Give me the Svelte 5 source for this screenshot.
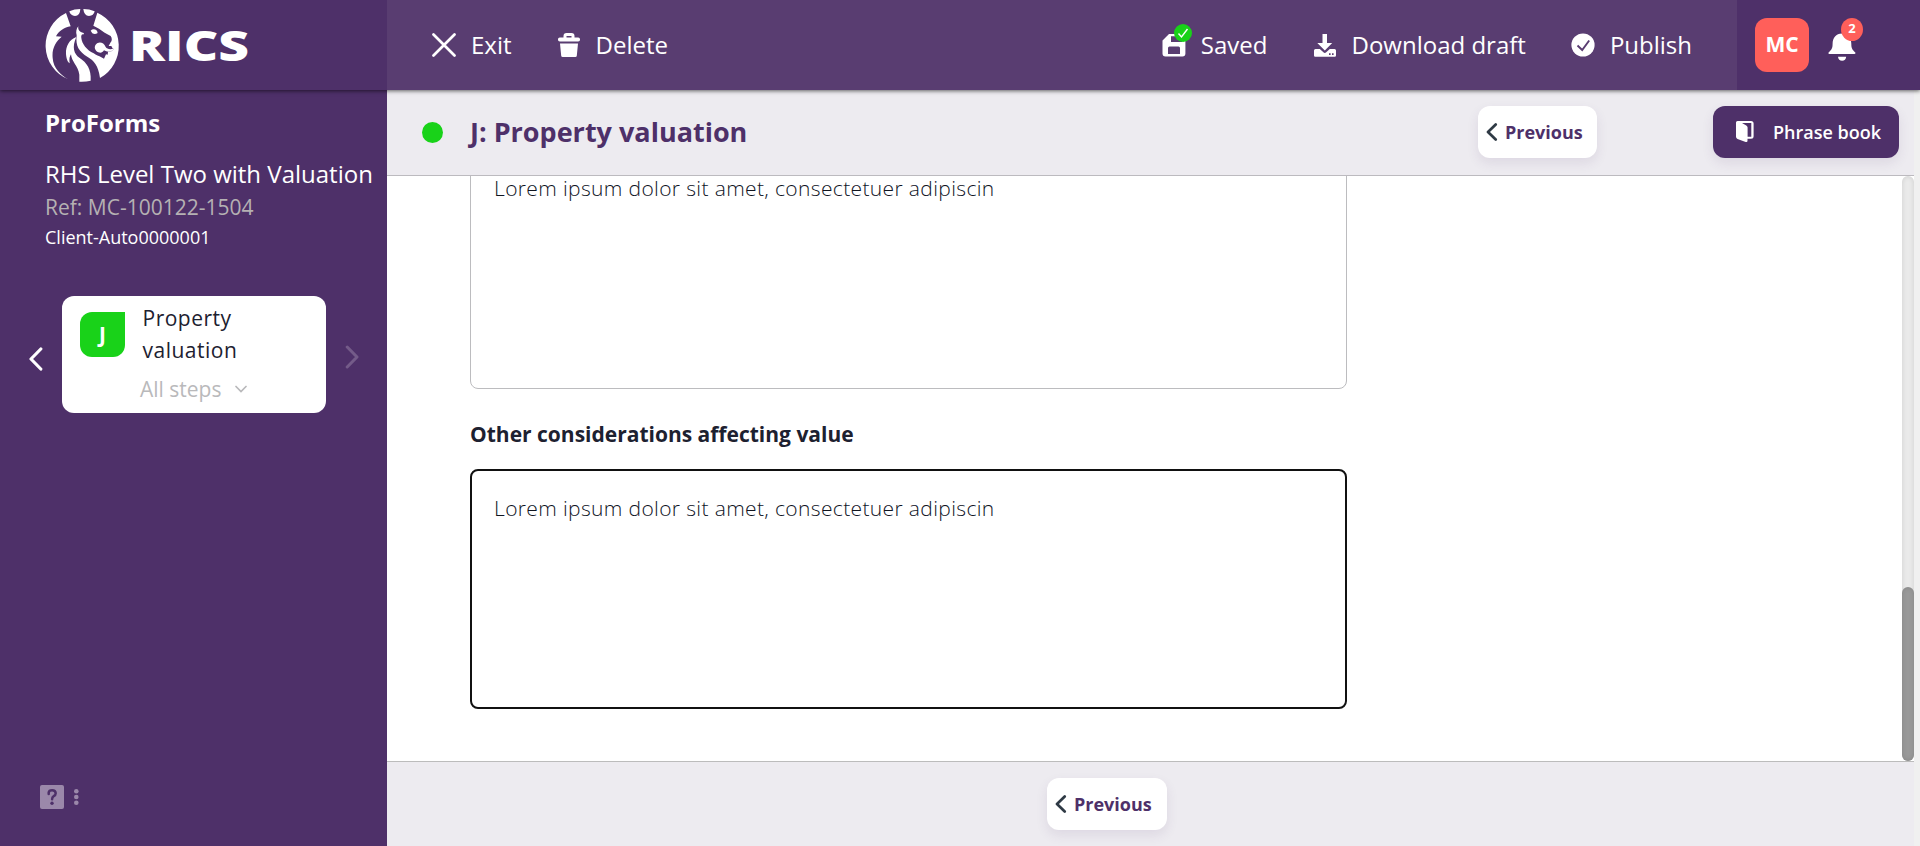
<script>
  const body = 'Lorem ipsum dolor sit amet, consectetuer adipiscin';
  const report = {
    name: 'RHS Level Two with Valuation',
    ref: 'Ref: MC-100122-1504',
    client: 'Client-Auto0000001'
  };
</script>

{#snippet previous()}
  <button class="btn light">
    <svg width="12" height="18" viewBox="0 0 12 18"><path d="M9.7 1.5 2 9l7.700 7.500" fill="none" stroke="#2f3a45" stroke-width="2.700" stroke-linecap="round" stroke-linejoin="round" /></svg>
    <span>Previous</span>
  </button>
{/snippet}

<div class="app">
  <header class="topbar">
    <div class="brand">
      <svg width="210" height="84" viewBox="0 0 210 84" role="img" aria-label="RICS">
        <g transform="scale(.33333) translate(-45 0)" fill="#fff">
          <path d="M108 39A109 109 0 0 0 115 238C93 226 70 205 68 174C65 145 78 124 95 110L78 109C87 93 102 83 122 79Z" />
          <path d="M118 34Q133 27 151 27Q150 48 135 48Q121 47 118 34ZM160 27Q178 27 194 34Q191 48 177 48Q162 47 160 27Z" />
          <path d="M139 111C117 120 107 138 108 162C109 176 113 187 119 190C117 177 119 169 123 163C124 184 145 199 148 224V245Q166 246 182 242C184 207 171 188 148 173C132 162 125 142 139 111Z" />
          <path fill-rule="evenodd" d="M202 38A110 110 0 0 1 210 234C205 196 192 182 173 171C147 155 136 139 140 106C137 97 139 85 145 79C143 89 148 96 161 99L162 103C154 101 153 107 154 114C156 132 170 150 191 160C198 166 207 168 214 172L222 176L228 163L233 164L234 156C244 156 250 151 251 146C239 149 231 147 227 141C221 126 205 124 197 134C191 142 196 153 205 157C212 160 218 158 222 151C232 157 243 156 250 149L244 138L236 138L242 127C246 124 247 115 242 108L224 98L207 86L190 77Z" />
          <path d="M182 92Q190 84 201 92L203 99Q195 105 187 100Z" />
        </g>
        <text x="84" y="60.500" class="wordmark" textLength="120" lengthAdjust="spacingAndGlyphs">RICS</text>
      </svg>
    </div>
    <nav class="actions">
      <button class="action exit">
        <svg width="24" height="24" viewBox="0 0 24 24"><path d="m1.500 1.500 21 21m0-21-21 21" stroke="#fff" stroke-width="2.700" stroke-linecap="round" /></svg>
        <span>Exit</span>
      </button>
      <button class="action delete">
        <svg width="22" height="24" viewBox="0 0 22 24" fill="#fff"><path d="M5.500 5V3Q5.500 0 8.500 0h5Q16.500 0 16.500 3v2h-3V3h-5v2Z" /><rect y="4.500" width="22" height="4" rx="1.800" /><path d="M2 10.500h18l-1.200 12.200Q18.700 24 17.300 24H4.700Q3.300 24 3.200 22.700Z" /></svg>
        <span>Delete</span>
      </button>
      <span class="grow"></span>
      <button class="action saved">
        <span class="disk">
          <svg width="24" height="24" viewBox="0 0 24 24"><path fill="#fff" fill-rule="evenodd" d="M7 1h13a3.400 3.400 0 0 1 3.400 3.400v16.200a3 3 0 0 1-3 3H3.500a3 3 0 0 1-3-3V7.500ZM9 3.200h11V9h-11ZM7.500 13.500a1.500 1.500 0 0 0-1.500 1.500v6h12v-6a1.500 1.500 0 0 0-1.500-1.500Z" /></svg>
          <svg class="tick" width="18" height="18" viewBox="0 0 18 18"><circle cx="9" cy="9" r="9" fill="#19d219" /><path d="m4.500 9.500 3 3.500 6-8" fill="none" stroke="#fff" stroke-width="1.400" /></svg>
        </span>
        <span>Saved</span>
      </button>
      <button class="action download">
        <svg width="22" height="24" viewBox="0 0 22 24" fill="#fff"><path d="M8.500 1h4.500v9h5.200L10.800 17.500 3.300 10h5.200Z" /><path fill-rule="evenodd" d="M1.500 16H5.800l3.600 3.300q1.400 1.200 2.800 0L15.800 16h4.700q1.500 0 1.500 1.500v5q0 1.300-1.300 1.300H1.300Q0 23.800 0 22.500v-5Q0 16 1.500 16ZM15 20.300v1.700h1.600v-1.700Zm3 0v1.700h1.600v-1.700Z" /></svg>
        <span>Download draft</span>
      </button>
      <button class="action publish">
        <svg width="24" height="24" viewBox="0 0 24 24"><circle cx="12" cy="12" r="11.600" fill="#fff" /><path d="m6.500 12.500 4.700 4.500 7-9.500" fill="none" stroke="#593c71" stroke-width="1.900" /></svg>
        <span>Publish</span>
      </button>
    </nav>
    <div class="account">
      <div class="avatar">MC</div>
      <div class="bell">
        <svg width="28" height="30" viewBox="0 0 28 30" fill="#fff"><path d="M14 2.500c6 0 9.300 4.500 9.300 10.300 0 4.700 1 6 4 8.700.5.700 0 1.500-.8 1.500H1.300c-.8 0-1.200-.8-.7-1.500 3-2.700 4-4 4-8.700C4.600 7 8 2.500 14 2.500ZM10 25.700h8.200q-.5 4-4.100 4T10 25.700Z" /></svg>
        <span class="count">2</span>
      </div>
    </div>
  </header>

  <div class="page">
    <aside>
      <h1>ProForms</h1>
      <p class="name">{report.name}</p>
      <p class="ref">{report.ref}</p>
      <p class="client">{report.client}</p>
      <div class="stepper">
        <svg class="back" width="14" height="24" viewBox="0 0 14 24"><path d="M11.800 2 2 12l9.800 10" fill="none" stroke="#fff" stroke-width="3.200" stroke-linecap="round" stroke-linejoin="round" /></svg>
        <div class="card">
          <div class="step">
            <span class="letter">J</span>
            <span class="label">Property valuation</span>
          </div>
          <div class="all">
            All steps
            <svg width="12" height="8" viewBox="0 0 12 8"><path d="m1 1.500 5 5 5-5" fill="none" stroke="#b9b9bb" stroke-width="1.700" stroke-linecap="round" /></svg>
          </div>
        </div>
        <svg class="next" width="14" height="24" viewBox="0 0 14 24"><path d="m2.200 2 9.800 10-9.800 10" fill="none" stroke="#745b89" stroke-width="3" stroke-linecap="round" stroke-linejoin="round" /></svg>
      </div>
      <div class="help">
        <svg width="39" height="24" viewBox="0 0 39 24"><rect width="24" height="24" rx="2" fill="#9b88aa" /><path d="M8.700 9V7.500q.3-2.300 3.500-2.300t3.500 3q0 1.800-2 2.900-1.600.9-1.600 3.100" fill="none" stroke="#4e3069" stroke-width="2.500" stroke-linecap="round" /><circle cx="12" cy="18.300" r="1.700" fill="#4e3069" /><g fill="#9b88aa"><circle cx="36.300" cy="6.300" r="2.300" /><circle cx="36.300" cy="12" r="2.300" /><circle cx="36.300" cy="17.700" r="2.300" /></g></svg>
      </div>
    </aside>

    <main>
      <div class="titlebar">
        <span class="status"></span>
        <h2>J: Property valuation</h2>
        {@render previous()}
        <button class="btn dark">
          <svg width="18" height="22" viewBox="0 0 18 22"><path d="M1.500 0H15q2.600 0 2.600 2.600v12.700q0 2.500-2.600 2.500h-3.500v1.900q0 1.800-1.800 1.200L1.500 18Q0 17.300 0 15.800V1.500Q0 0 1.500 0Z" fill="#fff" /><path d="M6 2h9.300v13.700h-3.700V6.500q0-1.400-1.300-2.100Z" fill="#4e3069" /></svg>
          <span>Phrase book</span>
        </button>
      </div>
      <div class="scroller">
        <div class="form">
          <div class="field first">{body}</div>
          <label for="other">Other considerations affecting value</label>
          <div class="field focused" id="other">{body}</div>
        </div>
        <div class="track"><div class="thumb"></div></div>
      </div>
      <footer>{@render previous()}</footer>
    </main>
    <div class="gutter"></div>
  </div>
</div>

<style>
  :global(body) { margin: 0; overflow: hidden; }
  .app { width: 1920px; height: 846px; display: flex; flex-direction: column; font-family: "Open Sans", sans-serif; color: #1d2130; background: #fff; overflow: hidden; }
  .app * { box-sizing: border-box; }
  button { font: inherit; color: inherit; border: 0; background: none; padding: 0; }
  svg { display: block; flex: none; }
  h1, h2, p { margin: 0; }
  .topbar { height: 90px; flex: none; display: flex; background: #4e3069; box-shadow: 0 1px 4px rgba(0, 0, 0, .6); position: relative; z-index: 1; }
  .brand { width: 387px; padding-left: 45px; }
  .wordmark { font: 800 43px "Open Sans", sans-serif; fill: #fff; }
  .actions { width: 1350px; display: flex; align-items: center; background: #593d71; padding: 0 45px; color: #fff; font-size: 24px; }
  .action { display: flex; align-items: center; height: 90px; white-space: nowrap; }
  .action > span:last-child { padding-bottom: 2px; }
  .exit { gap: 15px; }
  .delete { gap: 16px; margin-left: 46px; }
  .grow { flex: 1; }
  .saved { gap: 15px; }
  .download { gap: 16px; margin-left: 46px; }
  .publish { gap: 15px; margin-left: 45px; }
  .disk { position: relative; }
  .tick { position: absolute; left: 12px; top: -9px; }
  .account { flex: 1; display: flex; padding: 18px 0 0 18px; color: #fff; font-weight: 700; }
  .avatar { width: 54px; height: 54px; border-radius: 12px; background: #ff5f5a; font-size: 21px; line-height: 52px; text-align: center; }
  .bell { position: relative; margin: 13px 0 0 19px; height: 30px; }
  .count { position: absolute; left: 13px; top: -13px; width: 22px; height: 23px; border-radius: 50%; background: #ff5f5a; font-size: 13px; line-height: 21px; text-align: center; }
  .page { flex: 1; display: flex; min-height: 0; }
  aside { width: 387px; background: #4e3069; color: #fff; padding-top: 15px; display: flex; flex-direction: column; }
  aside h1, aside p { padding-left: 45px; white-space: nowrap; }
  h1 { font-size: 24px; font-weight: 700; line-height: 36px; }
  .name { font-size: 24px; line-height: 36px; margin-top: 15px; }
  .ref { font-size: 21px; line-height: 30px; color: #b5b1b3; }
  .client { font-size: 18px; line-height: 30px; }
  .stepper { display: flex; align-items: center; margin-top: 44px; padding: 0 28px 0 29px; }
  .back { margin: 8px 19px 0 0; }
  .next { margin: 5px 0 0 19px; }
  .card { width: 264px; height: 117px; border-radius: 12px; background: #fff; color: #1d2130; }
  .step { display: flex; gap: 17.500px; padding: 6px 0 0 18px; }
  .letter { width: 45px; height: 45px; margin-top: 10px; border-radius: 12px 0 12px 12px; background: #19d219; color: #fff; font-size: 21px; font-weight: 700; line-height: 45px; text-align: center; }
  .label { width: 110px; font-size: 21px; line-height: 32px; font-weight: 500; letter-spacing: .5px; }
  .all { display: flex; align-items: center; gap: 14px; padding-left: 78px; height: 30px; margin-top: 8px; font-size: 21px; color: #b9b9bb; }
  .help { margin: auto 0 37px 40px; }
  main { flex: 1; display: flex; flex-direction: column; min-width: 0; }
  .titlebar { height: 86px; flex: none; display: flex; align-items: center; background: #edebf0; border-bottom: 1px solid #bcbabf; padding: 0 15px 1px 35px; }
  .status { width: 21px; height: 21px; border-radius: 50%; background: #19d219; margin-right: 27px; }
  h2 { width: 1008px; font-size: 27px; font-weight: 700; color: #4e3069; white-space: nowrap; line-height: 40px; }
  .btn { height: 52px; border-radius: 12px; display: flex; align-items: center; font-size: 18px; font-weight: 700; white-space: nowrap; box-shadow: 0 5px 12px rgba(78, 48, 105, .1); }
  .light { width: 119px; background: #fff; color: #4e3069; padding-left: 8px; gap: 7px; }
  .light + .dark { margin-left: auto; }
  .dark { width: 186px; background: #4e3069; color: #fff; padding-left: 23px; gap: 19px; font-weight: 600; }
  .scroller { height: 585px; flex: none; display: flex; justify-content: space-between; overflow: hidden; background: #fff; }
  .form { width: 960px; padding-left: 83px; }
  .field { width: 877px; height: 240px; border: 1px solid #bcbcbf; border-radius: 8px; padding: 23px 23px; font-size: 21px; line-height: 30px; font-weight: 300; letter-spacing: .36px; color: #10141f; }
  .first { margin-top: -27px; }
  label { display: block; font-size: 21px; font-weight: 700; line-height: 32px; padding: 29px 0 19px; }
  .focused { border: 2px solid #111; padding: 22px; }
  .track { width: 12px; background: #eaeaea; border-radius: 6px; box-shadow: inset 0 0 5px rgba(0, 0, 0, .12); display: flex; align-items: flex-end; }
  .thumb { width: 12px; height: 174px; border-radius: 6px; background: #999; box-shadow: inset 0 0 5px rgba(0, 0, 0, .12); }
  footer { flex: 1; background: #edebf0; border-top: 1px solid #bcbcbc; padding: 16px 0 0 660px; }
  footer .light { width: 120px; }
  .gutter { width: 6px; background: #f0f0f0; }
</style>
